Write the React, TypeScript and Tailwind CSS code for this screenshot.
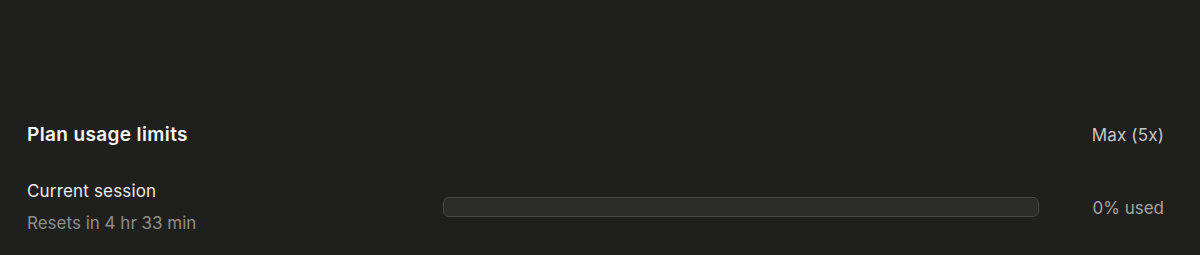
import React from 'react';

const App: React.FC = () => {
  return (
    <div
      className="h-[255px] w-full bg-[#1f1f1e] pl-[27px] pr-[36px] pt-[121px]"
      style={{ fontFamily: 'Inter, "Noto Sans", sans-serif' }}
    >
      {/* Header */}
      <div className="flex items-center justify-between">
        <h2 className="text-[19px] leading-[28px] font-semibold text-[#f7f6f2] tracking-[0.02em]">
          Plan usage limits
        </h2>
        <span className="text-[17px] leading-[28px] text-[#c9c7c0] tracking-[0.01em]">Max (5x)</span>
      </div>

      {/* Session row */}
      <div className="mt-[30px] flex items-center">
        <div className="w-[416px] flex flex-col gap-[8px]">
          <p className="text-[17px] leading-[24px] text-[#ecebe6] tracking-[0.01em]">Current session</p>
          <p className="text-[17px] leading-[24px] text-[#8f8e89]">Resets in 4 hr 33 min</p>
        </div>
        <div className="flex-1 h-[20px] rounded-[6px] border border-[#484846] bg-[#2b2b2a]" />
        <div className="w-[125px] pt-[1px] text-right text-[17px] leading-[24px] text-[#a6a49e]">0% used</div>
      </div>
    </div>
  );
};

export default App;
